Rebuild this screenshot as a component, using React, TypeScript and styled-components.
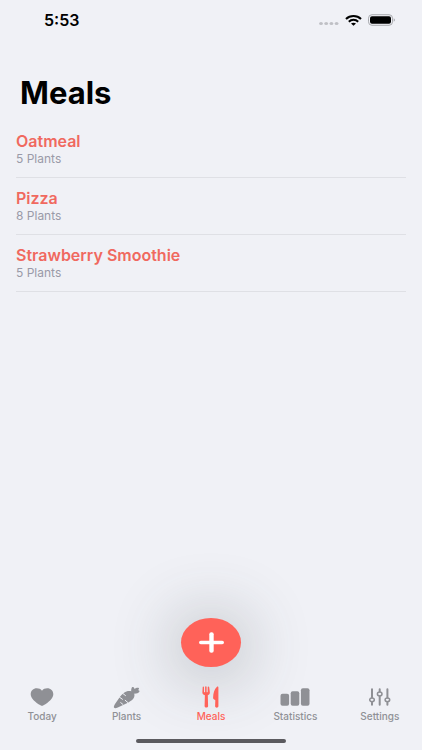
import React from "react";
import styled, { createGlobalStyle } from "styled-components";

const coral = "#ff6259";
const grey = "#8f9095";
const background = "#f0f1f6";

const GlobalStyle = createGlobalStyle`
  *, *::before, *::after { box-sizing: border-box; }
  body {
    margin: 0;
    background: ${background};
    font-family: Inter, "Liberation Sans", sans-serif;
  }
`;

const Screen = styled.div`
  min-height: 100vh;
  display: flex;
  flex-direction: column;
  background: ${background};
  overflow: hidden;
`;

const StatusBar = styled.header`
  height: 40px;
  padding: 0 26px 0 44px;
  display: flex;
  align-items: center;
  justify-content: space-between;
`;

const Clock = styled.time`
  font-size: 16px;
  line-height: 20px;
  font-weight: 600;
  color: #000;
`;

const StatusIcons = styled.div`
  display: flex;
  align-items: center;
  gap: 6px;
  svg { display: block; }
`;

const Main = styled.main`
  flex: 1;
  padding: 35px 16px 0;
`;

const Title = styled.h1`
  margin: 0;
  padding-left: 4px;
  font-size: 31px;
  line-height: 36px;
  font-weight: 700;
  color: #000;
`;

const MealList = styled.ul`
  list-style: none;
  margin: 10px 0 0;
  padding: 0;
`;

const MealItem = styled.li`
  height: 57px;
  padding-top: 11px;
  border-bottom: 1px solid #dfe0e5;
`;

const MealName = styled.a`
  display: block;
  font-size: 16px;
  line-height: 18px;
  font-weight: 600;
  color: #f0695f;
  text-decoration: none;
`;

const PlantCount = styled.p`
  margin: 0;
  font-size: 12px;
  line-height: 18px;
  color: #9a9aa8;
`;

const Footer = styled.footer`
  display: flex;
  flex-direction: column;
  align-items: center;
`;

const AddButton = styled.button`
  width: 60px;
  height: 49px;
  padding: 0;
  border: 0;
  border-radius: 50%;
  display: grid;
  place-items: center;
  background: ${coral};
  box-shadow: 0 4px 64px 8px rgba(60, 70, 75, 0.3);
`;

const TabBar = styled.nav`
  width: 100%;
  margin-top: 18px;
  display: grid;
  grid-template-columns: repeat(5, 1fr);
`;

const Tab = styled.a<{ $active?: boolean }>`
  display: flex;
  flex-direction: column;
  align-items: center;
  gap: 1px;
  color: ${(p) => (p.$active ? coral : grey)};
  font-size: 10px;
  line-height: 12px;
  font-weight: 500;
  text-decoration: none;
`;

const TabIcon = styled.span`
  height: 24px;
  display: grid;
  place-items: center;
  svg { display: block; }
`;

const HomeIndicator = styled.div`
  width: 150px;
  height: 4px;
  margin: 17px 0 7px;
  border-radius: 2px;
  background: #5b5a5f;
`;

const SignalDots = () => (
  <svg width="20" height="12" viewBox="0 0 20 12" fill="#bfc0c5" aria-hidden="true">
    <ellipse cx="2" cy="9.500" rx="1.900" ry="1.600" />
    <ellipse cx="7.200" cy="9.500" rx="1.900" ry="1.600" />
    <ellipse cx="12.400" cy="9.500" rx="1.900" ry="1.600" />
    <ellipse cx="17.600" cy="9.500" rx="1.900" ry="1.600" />
  </svg>
);

const Wifi = () => (
  <svg width="17" height="11" viewBox="0 0 17 11" fill="none" stroke="#000" strokeWidth="2" aria-hidden="true">
    <path d="M1 4C5 0 12 0 16 4" />
    <path d="M3.800 6.700c2.600-2.500 6.800-2.500 9.400 0" />
    <path d="M6 8.600c1.400-1.200 3.600-1.200 5 0L8.500 10.800z" fill="#000" stroke="none" />
  </svg>
);

const Battery = () => (
  <svg width="28" height="12" viewBox="0 0 28 12" aria-hidden="true">
    <rect x="0.500" y="0.700" width="24" height="10.600" rx="3.500" fill="none" stroke="#a9aaae" />
    <rect x="2" y="2.200" width="21" height="7.600" rx="2" fill="#000" />
    <path d="M25.700 4.300c1.700.6 1.700 2.800 0 3.400z" fill="#a9aaae" />
  </svg>
);

const Plus = () => (
  <svg width="25" height="21" viewBox="0 0 25 21" fill="#fff" aria-hidden="true">
    <rect x="0" y="8.700" width="25" height="3.600" rx="1.800" />
    <rect x="10.300" y="0.300" width="4.400" height="20.400" rx="2" />
  </svg>
);

const Heart = () => (
  <svg width="24" height="18" viewBox="0 0 24 18" fill="currentColor" aria-hidden="true">
    <path d="M12 2.700C10.800 1 8.800.3 6.800.3 3.300.3.700 2.900.7 6.200c0 4.300 4.600 8 9.800 11.100.6.400 1 .5 1.500.5s.9-.1 1.500-.5c5.200-3.100 9.800-6.800 9.800-11.100 0-3.300-2.600-5.900-6.100-5.900-2 0-4 .7-5.200 2.400z" />
  </svg>
);

const Carrot = () => (
  <svg width="27" height="23" viewBox="0 0 27 23" fill="currentColor" aria-hidden="true">
    <path d="M1.200 21.800C.5 21.200 1 19.600 2 18l5-7.200c2-2.700 4.200-4.500 6.500-5.300 2.300-.8 4.900-.5 6.600.8 1.500 1.300 1.800 3.500.9 5.200-1 2-3.100 3.500-5.600 4.900L4.800 21.400c-1.600.8-3 1-3.600.4z" />
    <path d="M18.300 6.300c-.4-2 0-4.400 1.100-5.200.9-.6 1.900.3 2.100 1.900 1.400-1.100 3.600-1.600 4.400-.8.500.6-.2 1.400-1.200 1.900 1.300.1 2.100.8 1.700 1.600-.7 1.400-3.800 2.300-6.100 1.900z" />
    <g fill="none" stroke={background} strokeWidth="1" strokeLinecap="round">
      <path d="M9.200 7l3.300 2.600M6.500 11.200l3 2.100M12.200 14.300l2.700 2.300M7.700 16.600l2.200 1.800" />
    </g>
  </svg>
);

const ForkKnife = () => (
  <svg width="18" height="22" viewBox="0 0 18 22" fill="currentColor" aria-hidden="true">
    <path d="M1.300.5c.4 0 .7.300.7.700v4.500c0 .7 1.100.7 1.100 0V1c0-.9 1.500-.9 1.500 0v4.700c0 .7 1.100.7 1.100 0V1.200c0-.9 1.400-.9 1.500 0L7.800 6c.2 1.700-.6 2.600-2 3.300l.3 10.800c0 2-3.500 2-3.500 0L2.900 9.300C1.100 8.600.2 7.700.4 6L.7 1.100c0-.3.300-.6.600-.6z" />
    <path d="M15.700.6c.5 0 .7.300.7.800v18.800c0 1.900-3.300 1.900-3.300 0l.2-6-1.400-.9c-.7-.4-.8-.9-.8-1.700C11.200 7 12.600 2.800 14.800.9c.3-.2.500-.3.900-.3z" />
  </svg>
);

const Bars = () => (
  <svg width="30" height="18" viewBox="0 0 30 18" fill="currentColor" aria-hidden="true">
    <rect x="0.500" y="5.800" width="8.600" height="12" rx="2" />
    <rect x="10.700" y="3.300" width="8.600" height="14.500" rx="2" />
    <rect x="20.900" y="0.200" width="8.600" height="17.600" rx="2" />
  </svg>
);

const Sliders = () => (
  <svg width="22" height="18" viewBox="0 0 22 18" fill="none" stroke="currentColor" aria-hidden="true">
    <g strokeWidth="2" strokeLinecap="round">
      <path d="M3 1.200v8.400M3 14.400v2.400" />
      <path d="M10.700 1.200v2.400M10.700 8.400v8.400" />
      <path d="M18.400 1.200v8.400M18.400 14.400v2.400" />
    </g>
    <g strokeWidth="1.500">
      <ellipse cx="3" cy="11.800" rx="2.300" ry="1.900" />
      <ellipse cx="10.700" cy="6" rx="2.300" ry="1.900" />
      <ellipse cx="18.400" cy="11.800" rx="2.300" ry="1.900" />
    </g>
  </svg>
);

const meals = [
  { name: "Oatmeal", plants: 5 },
  { name: "Pizza", plants: 8 },
  { name: "Strawberry Smoothie", plants: 5 },
];

const tabs = [
  { label: "Today", icon: <Heart /> },
  { label: "Plants", icon: <Carrot /> },
  { label: "Meals", icon: <ForkKnife />, active: true },
  { label: "Statistics", icon: <Bars /> },
  { label: "Settings", icon: <Sliders /> },
];

export default function App() {
  return (
    <Screen>
      <GlobalStyle />
      <StatusBar>
        <Clock>5:53</Clock>
        <StatusIcons>
          <SignalDots />
          <Wifi />
          <Battery />
        </StatusIcons>
      </StatusBar>
      <Main>
        <Title>Meals</Title>
        <MealList>
          {meals.map((meal) => (
            <MealItem key={meal.name}>
              <MealName href="#">{meal.name}</MealName>
              <PlantCount>{meal.plants} Plants</PlantCount>
            </MealItem>
          ))}
        </MealList>
      </Main>
      <Footer>
        <AddButton type="button" aria-label="Add meal">
          <Plus />
        </AddButton>
        <TabBar>
          {tabs.map((tab) => (
            <Tab key={tab.label} href="#" $active={tab.active} aria-current={tab.active ? "page" : undefined}>
              <TabIcon>{tab.icon}</TabIcon>
              {tab.label}
            </Tab>
          ))}
        </TabBar>
        <HomeIndicator />
      </Footer>
    </Screen>
  );
}
